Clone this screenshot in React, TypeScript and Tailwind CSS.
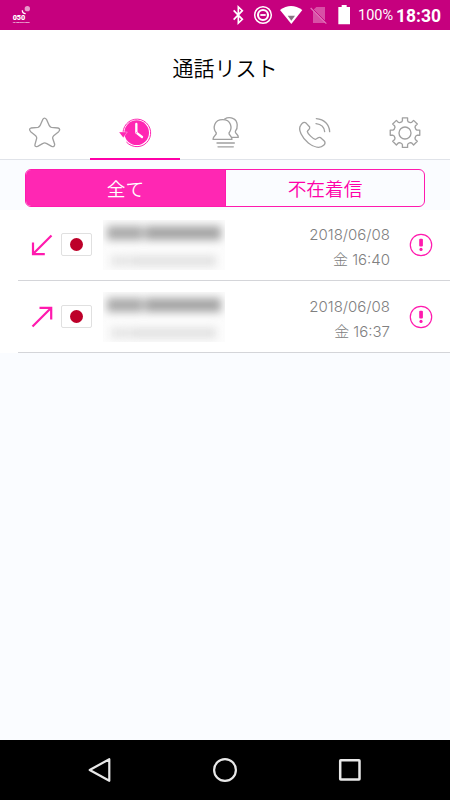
import type { ReactNode } from "react";

type CallEntry = {
  direction: "in" | "out";
  date: string;
  time: string;
};

const calls: CallEntry[] = [
  { direction: "in", date: "2018/06/08", time: "金 16:40" },
  { direction: "out", date: "2018/06/08", time: "金 16:37" },
];

// Eight-toothed outline around (195, 83)
const gearPoints = Array.from({ length: 8 }, (_, tooth) =>
  [
    [-17, 34],
    [-12, 37],
    [-10, 45],
    [10, 45],
    [12, 37],
    [17, 34],
  ].map(([offset, radius]) => {
    const angle = ((tooth * 45 + offset) * Math.PI) / 180;
    return `${(195 + radius * Math.cos(angle)).toFixed(1)},${(83 + radius * Math.sin(angle)).toFixed(1)}`;
  })
)
  .flat()
  .join(" ");

function StatusBar() {
  return (
    <div className="flex h-[30px] items-center bg-[#c6007e] text-white">
      <svg className="ml-[12px] h-[30px] w-[24px] overflow-visible" viewBox="36 0 72 90" fill="white">
        <circle cx="82" cy="26" r="8" opacity="0.6" />
        <path d="M67 31c0 7 4 10 10 10" fill="none" stroke="white" strokeWidth="4" />
        <text x="38" y="59" fontSize="19" fontWeight="900" textLength="38" lengthAdjust="spacingAndGlyphs" fontFamily="Roboto, sans-serif">
          050
        </text>
        <text x="39" y="70" fontSize="6.5" fontWeight="700" textLength="50" lengthAdjust="spacingAndGlyphs" fontFamily="Roboto, sans-serif">
          for SMARTPHONE
        </text>
      </svg>

      <div className="ml-auto flex items-center">
        <svg className="h-[30px] w-[13px]" viewBox="21 0 39 90" fill="none" stroke="white" strokeWidth="5">
          <path d="M26 31 52 58 40 69V21l12 11-26 27" />
        </svg>
        <svg className="ml-[8px] h-[30px] w-[20px]" viewBox="84 0 60 90" fill="none" stroke="white">
          <circle cx="114" cy="45" r="25" strokeWidth="4.5" />
          <circle cx="114" cy="45" r="15" strokeWidth="6.5" />
          <path d="M106 45h16" strokeWidth="5.5" />
        </svg>
        <svg className="ml-[6px] h-[30px] w-[24px]" viewBox="162 0 72 90">
          <path d="M165 30Q198 6 232 30L199 72Z" fill="white" />
          <path d="M188 47h22l-11 15Z" fill="#8a7584" />
        </svg>
        <svg className="ml-[6px] h-[30px] w-[19px]" viewBox="252 0 57 90">
          <path d="M274 21h26v48h-36V31Z" fill="#d850a6" />
          <path d="m259 22 47 47" stroke="#c6007e" strokeWidth="3" />
          <path d="m257 24 47 47" stroke="#df72b9" strokeWidth="3.5" />
        </svg>
        <svg className="ml-[9px] h-[30px] w-[14px]" viewBox="336 0 42 90" fill="white">
          <path d="M340 21h10v-6h15v6h10v52h-35Z" />
        </svg>
      </div>

      <span className="ml-[7px] w-[38px] pt-[3px] font-['Roboto',sans-serif] text-[14.5px] leading-none">100%</span>
      <span className="mr-[8px] w-[46px] pt-[3px] font-['Roboto',sans-serif] text-[17.5px] leading-none font-bold whitespace-nowrap">
        18:30
      </span>
    </div>
  );
}

type TabProps = { viewBox: string; active?: boolean; children: ReactNode };

function Tab({ viewBox, active, children }: TabProps) {
  return (
    <button
      className={
        active
          ? "flex h-[55px] flex-1 justify-center border-b-[2.5px] border-[#ff00a8] pt-[9px]"
          : "flex h-[55px] flex-1 justify-center border-b border-[#e0e3e9] pt-[9px]"
      }
    >
      <svg
        className="size-9 overflow-visible"
        viewBox={viewBox}
        fill="none"
        stroke="#a0a0a0"
        strokeWidth="4"
        strokeLinecap="round"
        strokeLinejoin="round"
      >
        {children}
      </svg>
    </button>
  );
}

function TabBar() {
  return (
    <div className="flex">
      <Tab viewBox="36 27 108 108">
        <path d="M83 44Q88 35 95 44L103 62Q105 66 109 67L129 69Q138 72 131 80L116 92Q112 96 113 100L119 118Q119 127 110 124L94 115Q89 112 84 115L68 124Q58 127 60 118L65 100Q66 96 62 92L47 80Q40 72 48 69L69 67Q73 66 75 62Z" />
      </Tab>

      <Tab viewBox="306 27 108 108" active>
        <circle cx="365" cy="83" r="37" fill="#ff27b3" stroke="none" />
        <path d="M324 82A41.5 41.5 0 1 1 335 112" stroke="#ff27b3" strokeWidth="3" />
        <path d="M312 81h25l-12 17Z" fill="#ff27b3" stroke="white" strokeWidth="1" />
        <path d="M364 57v26l17 13" stroke="white" strokeWidth="7" />
        <circle cx="364" cy="83" r="1.5" fill="#ff27b3" stroke="none" />
      </Tab>

      <Tab viewBox="36 27 108 108">
        <path d="M89 42C97 37 107 37 115 41C130 48 129 70 121 79C120 87 130 87 130 97H112" />
        <path d="M54 103C54 92 65 91 64 84C52 70 57 44 83 44C109 44 113 70 102 84C101 91 111 92 111 103Z" />
        <path d="M66 114h52M69 125.5h46" />
      </Tab>

      <Tab viewBox="306 27 108 108">
        <path d="M317 61C308 73 321 99 340 114C358 128 376 131 386 121C392 115 391 111 387 107L377 98C370 94 367 102 361 103C354 102 338 86 337 80C338 75 346 74 344 66L334 55C327 49 322 54 317 61Z" />
        <path d="M363 56C379 58 388 68 389 80M364 41C388 43 403 59 404 80" />
      </Tab>

      <Tab viewBox="141 27 108 108">
        <polygon points={gearPoints} />
        <circle cx="195" cy="84" r="18" />
      </Tab>
    </div>
  );
}

function SegmentedControl() {
  return (
    <div className="px-[25px] pt-[9px] pb-[3px]">
      <div className="flex h-[38px] overflow-hidden rounded-[6px] border border-[#ff1aae] text-[18.7px] font-[350]">
        <button className="w-[199px] bg-[#ff27b3] text-white">全て</button>
        <button className="flex-1 border-l border-[#ff1aae] text-[#ff00a8]">不在着信</button>
      </div>
    </div>
  );
}

function CallRow({ direction, date, time }: CallEntry) {
  return (
    <div className="bg-white pl-[18px] first:h-[71px] last:h-[72px] last:pt-px">
      <div className="flex h-full items-center border-b border-[#d4d5d9]">
        <svg className="mb-px ml-[12px] size-6" viewBox="0 0 24 24" fill="none" stroke="#ff1aae" strokeWidth="2.2">
          {direction === "in" ? (
            <path d="M21.5 2.5 3 21M3 9.5v11.7h11.8" />
          ) : (
            <path d="M2.5 21.5 21 3M9.5 2.8h11.7v11.8" />
          )}
        </svg>

        <div className="mb-px ml-[7px] flex h-[23px] w-[31px] items-center justify-center rounded-[2px] border border-[#e0e0e0] bg-white">
          <div className="size-[13.5px] rounded-full bg-[#bd0029]" />
        </div>

        {/* Caller name and number stay masked */}
        <div className="ml-[11px] h-[50px] w-[122px] overflow-hidden bg-[#fcfcfc]">
          <div className="mt-[6px] ml-[4px] flex h-[14px] gap-[2px] pr-[4px] blur-[4.5px]">
            <div className="w-[36px] bg-[#aaaaaa]" />
            <div className="flex-1 bg-[#a4a4a4]" />
          </div>
          <div className="mt-[16px] ml-[8px] flex h-[10px] gap-px pr-[9px] blur-[4.5px]">
            <div className="w-[18px] bg-[#e4e4e4]" />
            <div className="flex-1 bg-[#e0e0e0]" />
          </div>
        </div>

        <div className="ml-auto pt-[3px] text-right text-[15px] leading-[25px] font-light text-[#808080]">
          <p className="font-['Inter','Noto_Sans_CJK_JP',sans-serif]">{date}</p>
          <p className="font-['Inter','Noto_Sans_CJK_JP',sans-serif]">{time}</p>
        </div>

        <svg className="mr-[17px] mb-px ml-[19px] size-6" viewBox="0 0 24 24" fill="#ff1aae">
          <circle cx="12" cy="12" r="10.7" fill="none" stroke="#ff1aae" strokeWidth="1.2" />
          <rect x="10.2" y="5.8" width="3.7" height="7.6" rx="1" />
          <circle cx="12" cy="16.4" r="1.6" />
        </svg>
      </div>
    </div>
  );
}

function NavigationBar() {
  return (
    <div className="flex h-[60px] items-center justify-center gap-[101px] bg-black">
      <svg className="size-6" viewBox="0 0 24 24" fill="none" stroke="#e8e8e8" strokeWidth="2.2" strokeLinejoin="round">
        <path d="M1.7 12 21.3 1.2v21.6Z" />
      </svg>
      <svg className="size-6" viewBox="0 0 24 24" fill="none" stroke="#e8e8e8" strokeWidth="2.2">
        <circle cx="12" cy="12" r="10.9" />
      </svg>
      <svg className="size-6" viewBox="0 0 24 24" fill="none" stroke="#e8e8e8" strokeWidth="2.5">
        <rect x="2.2" y="2.2" width="19.3" height="19.3" rx="0.5" />
      </svg>
    </div>
  );
}

function App() {
  return (
    <div className="flex h-[800px] w-[450px] flex-col overflow-hidden bg-[#fafcff] font-['Noto_Sans_CJK_JP',sans-serif]">
      <StatusBar />

      <div className="bg-white">
        <h1 className="flex h-[75px] items-center justify-center text-[21px] font-[350] text-black">通話リスト</h1>
        <TabBar />
      </div>

      <SegmentedControl />

      <div className="flex-1">
        {calls.map((call) => (
          <CallRow key={call.time} {...call} />
        ))}
      </div>

      <NavigationBar />
    </div>
  );
}

export default App;
